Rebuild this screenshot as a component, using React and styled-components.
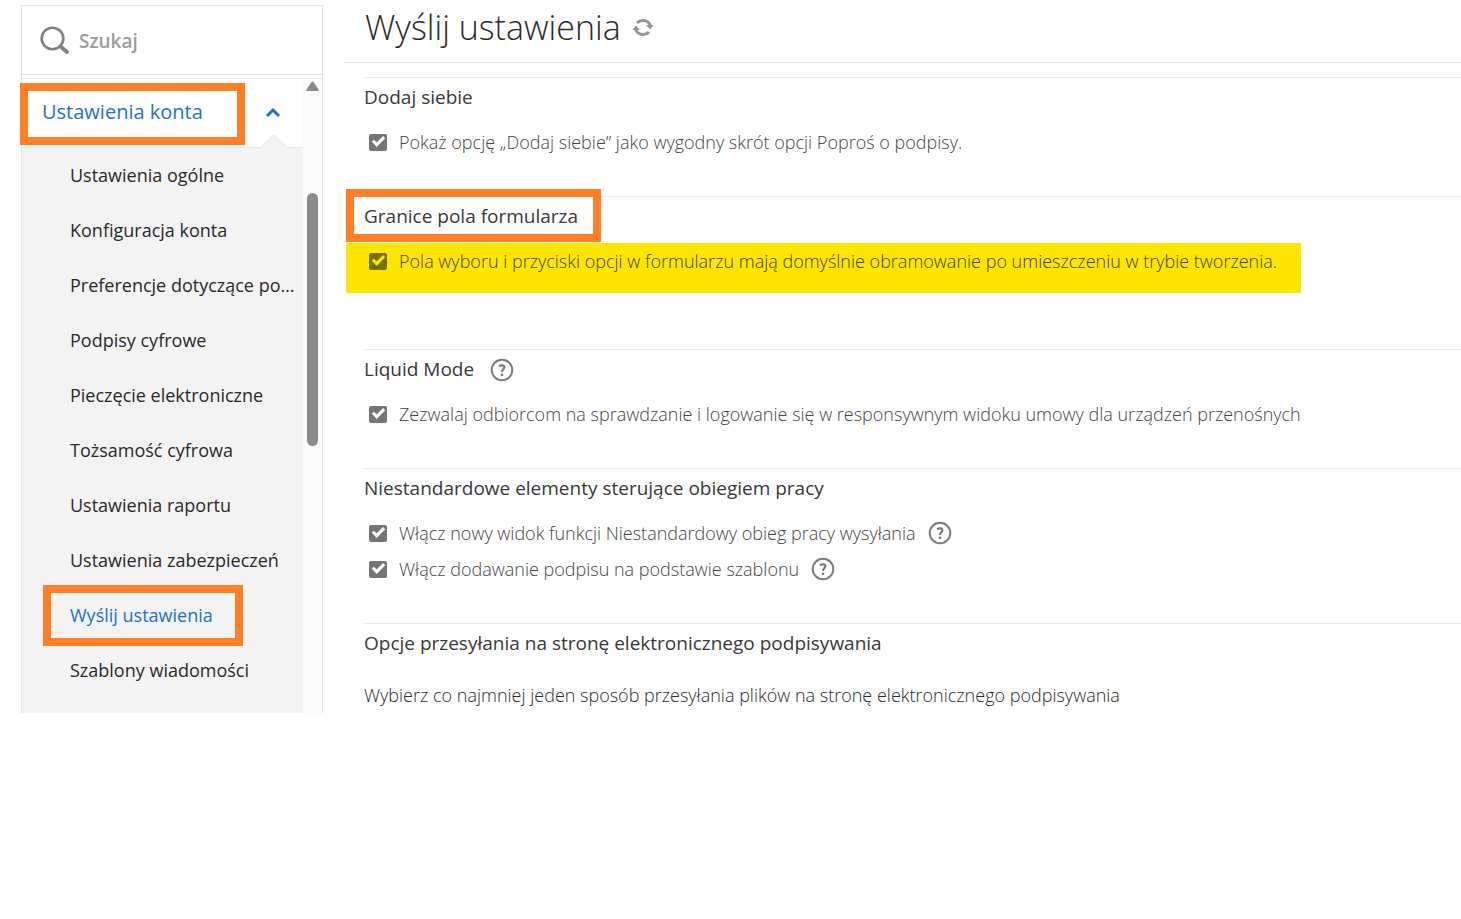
import React from 'react';
import styled, { createGlobalStyle, css } from 'styled-components';

const GlobalStyle = createGlobalStyle`
  *, *::before, *::after { box-sizing: border-box; }
  body {
    margin: 0;
    background: #fff;
    color: #4b4b4b;
    font-family: "Open Sans", "Noto Sans", sans-serif;
    font-size: 18px;
    line-height: 24px;
  }
  h1, h2, p, ul { margin: 0; padding: 0; }
  button, input { font: inherit; }
`;

const callout = css`
  position: relative;
  &::after {
    content: '';
    position: absolute;
    inset: ${p => p.$callout};
    border: 8px solid #ff7f27;
    pointer-events: none;
  }
`;

const Page = styled.div`
  display: grid;
  grid-template-columns: 302px minmax(0, 1fr);
  column-gap: 21px;
  padding-left: 21px;
`;

const Sidebar = styled.aside`
  margin-top: 5px;
  border: 1px solid #e4e4e4;
  border-bottom: 0;
  align-self: start;
`;

const Search = styled.label`
  display: flex;
  align-items: center;
  gap: 9px;
  height: 69px;
  padding: 2px 18px 0;
  border-bottom: 1px solid #e4e4e4;
`;

const SearchInput = styled.input`
  flex: 1;
  min-width: 0;
  border: 0;
  outline: 0;
  padding: 0;
  background: transparent;
  font-size: 19px;
  font-weight: 600;
  &::placeholder { color: #9b9b9b; opacity: 1; }
`;

const MenuArea = styled.div`
  display: flex;
  margin-top: 3px;
  border-top: 1px solid #eee;
`;

const Menu = styled.nav`
  flex: 1;
  min-width: 0;
`;

const GroupButton = styled.button`
  display: flex;
  align-items: center;
  justify-content: space-between;
  position: relative;
  width: 100%;
  height: 69px;
  padding: 0 22px 2px 20px;
  border: 0;
  border-bottom: 1px solid #e6e6e6;
  background: #fff;
  color: #2272c8;
  font-size: 20px;
  text-align: left;
`;

const GroupName = styled.span`
  ${p => p.$callout && callout}
`;

const Notch = styled.svg`
  position: absolute;
  right: 15px;
  bottom: -1px;
`;

const Items = styled.ul`
  list-style: none;
  padding-bottom: 15px;
  background: #f3f3f3;
`;

const Item = styled.li`
  display: flex;
  align-items: center;
  height: 55px;
  padding: 0 0 2px 48px;
  white-space: nowrap;
`;

const ItemLink = styled.a`
  color: ${p => (p.$active ? '#2272c8' : '#2a2a2a')};
  text-decoration: none;
  ${p => p.$callout && callout}
`;

const ScrollTrack = styled.div`
  width: 19px;
  padding-top: 2px;
  background: #fbfbfb;
  display: flex;
  flex-direction: column;
  align-items: center;
  gap: 102px;
`;

const ScrollThumb = styled.div`
  width: 11px;
  height: 253px;
  border-radius: 6px;
  background: #8b8b8b;
`;

const Main = styled.main`
  min-width: 0;
`;

const TitleBar = styled.header`
  display: flex;
  align-items: center;
  gap: 11px;
  height: 63px;
  padding: 0 0 8px 21px;
  margin-bottom: 14px;
  border-bottom: 1px solid #e4e4e4;
`;

const Title = styled.h1`
  color: #2a2a2a;
  font-size: 34px;
  font-weight: 300;
  line-height: 48px;
`;

const IconButton = styled.button`
  display: flex;
  padding: 0;
  border: 0;
  background: none;
`;

const Section = styled.section`
  margin-left: 20px;
  padding-bottom: 36px;
  border-top: 1px solid #eaeaea;
`;

const SectionHead = styled.div`
  display: flex;
  align-items: center;
  gap: 16px;
  height: 40px;
  margin-bottom: 6px;
`;

const Heading = styled.h2`
  padding-bottom: 2px;
  color: #383838;
  font-size: 19px;
  font-weight: 500;
  ${p => p.$callout && callout}
`;

const Option = styled.div`
  display: flex;
  align-items: center;
  gap: 12px;
  height: 36px;
  padding-left: 5px;
  white-space: nowrap;
  ${p => p.$highlighted && css`
    width: fit-content;
    height: 50px;
    margin: 0 0 20px -18px;
    padding: 0 24px 14px 23px;
    background: #ffe600;
  `}
`;

const Checkbox = styled.input.attrs({ type: 'checkbox' })`
  appearance: none;
  display: flex;
  justify-content: center;
  width: 18px;
  height: 17px;
  margin: 0;
  border-radius: 2px;
  background: ${p => (p.$highlighted ? '#757000' : '#757575')};
  &:checked::before {
    content: '';
    width: 7px;
    height: 12px;
    border: solid ${p => (p.$highlighted ? '#ffe600' : '#fff')};
    border-width: 0 3px 3px 0;
    transform: rotate(45deg);
  }
`;

const OptionLabel = styled.label`
  color: ${p => (p.$highlighted ? '#463f00' : '#444')};
  font-weight: 300;
`;

const Note = styled.p`
  color: #2a2a2a;
  font-weight: 300;
  line-height: 50px;
`;

const SearchIcon = () => (
  <svg width="30" height="30" viewBox="0 0 30 30" fill="none" stroke="#808080" aria-hidden="true">
    <circle cx="12.500" cy="12.500" r="10.800" strokeWidth="2.600" />
    <path d="M20.500 20.500 27 26" strokeWidth="4" strokeLinecap="round" />
  </svg>
);

const RefreshIcon = () => (
  <svg width="22" height="22" viewBox="0 0 22 22" fill="none" aria-hidden="true">
    <path d="M5 7A8 8 0 0 1 18.300 9.500M17 16A8 8 0 0 1 3.700 13.500" stroke="#959595" strokeWidth="3" />
    <path d="M14 9H21.500L18.300 13.500ZM.5 14H8L3.700 9.500Z" fill="#959595" />
  </svg>
);

const HelpIcon = () => (
  <svg width="24" height="24" viewBox="0 0 24 24" fill="none" stroke="#7c7c7c" aria-hidden="true">
    <circle cx="12" cy="12" r="10.300" strokeWidth="2" />
    <path d="M9.200 8.400C10.500 7 14.300 6.800 14.300 9.300C14.300 11.300 12 11.500 12 14" strokeWidth="2.200" />
    <circle cx="12" cy="16.800" r="1.400" fill="#7c7c7c" stroke="none" />
  </svg>
);

const Help = () => (
  <IconButton type="button" aria-label="Pomoc"><HelpIcon /></IconButton>
);

const menuItems = [
  'Ustawienia ogólne',
  'Konfiguracja konta',
  'Preferencje dotyczące po…',
  'Podpisy cyfrowe',
  'Pieczęcie elektroniczne',
  'Tożsamość cyfrowa',
  'Ustawienia raportu',
  'Ustawienia zabezpieczeń',
  'Wyślij ustawienia',
  'Szablony wiadomości',
];

const sections = [
  {
    title: 'Dodaj siebie',
    options: [{ id: 'add-me', text: 'Pokaż opcję „Dodaj siebie” jako wygodny skrót opcji Poproś o podpisy.' }],
  },
  {
    title: 'Granice pola formularza',
    callout: '-15px -23px -12px -18px',
    options: [{
      id: 'borders',
      highlighted: true,
      text: 'Pola wyboru i przyciski opcji w formularzu mają domyślnie obramowanie po umieszczeniu w trybie tworzenia.',
    }],
  },
  {
    title: 'Liquid Mode',
    help: true,
    options: [{ id: 'liquid', text: 'Zezwalaj odbiorcom na sprawdzanie i logowanie się w responsywnym widoku umowy dla urządzeń przenośnych' }],
  },
  {
    title: 'Niestandardowe elementy sterujące obiegiem pracy',
    options: [
      { id: 'workflow', help: true, text: 'Włącz nowy widok funkcji Niestandardowy obieg pracy wysyłania' },
      { id: 'template', help: true, text: 'Włącz dodawanie podpisu na podstawie szablonu' },
    ],
  },
  {
    title: 'Opcje przesyłania na stronę elektronicznego podpisywania',
    note: 'Wybierz co najmniej jeden sposób przesyłania plików na stronę elektronicznego podpisywania',
    options: [],
  },
];

export default function App() {
  return (
    <>
      <GlobalStyle />
      <Page>
        <Sidebar>
          <Search>
            <SearchIcon />
            <SearchInput type="text" placeholder="Szukaj" aria-label="Szukaj" />
          </Search>
          <MenuArea>
            <Menu>
              <GroupButton type="button" aria-expanded="true">
                <GroupName $callout="-17px -42px -21px -22px">Ustawienia konta</GroupName>
                <svg width="16" height="12" viewBox="0 0 16 12" fill="none" aria-hidden="true">
                  <path d="M2 10 8 4 14 10" stroke="#2272c8" strokeWidth="3" />
                </svg>
                <Notch width="28" height="14" viewBox="0 0 28 14" aria-hidden="true">
                  <path d="M0 14 14 1 28 14Z" fill="#f3f3f3" />
                  <path d="M1 13 14 1 27 13" fill="none" stroke="#e6e6e6" />
                </Notch>
              </GroupButton>
              <Items>
                {menuItems.map(name => {
                  const active = name === 'Wyślij ustawienia';
                  return (
                    <Item key={name}>
                      <ItemLink
                        href="#"
                        $active={active}
                        $callout={active ? '-18px -30px -19px -27px' : undefined}
                      >
                        {name}
                      </ItemLink>
                    </Item>
                  );
                })}
              </Items>
            </Menu>
            <ScrollTrack>
              <svg width="13" height="10" viewBox="0 0 13 10" aria-hidden="true">
                <path d="M5.500 1Q6.500 0 7.500 1L12.500 8.500Q13 10 12 10H1Q0 10 .5 8.500Z" fill="#8b8b8b" />
              </svg>
              <ScrollThumb />
            </ScrollTrack>
          </MenuArea>
        </Sidebar>
        <Main>
          <TitleBar>
            <Title>Wyślij ustawienia</Title>
            <IconButton type="button" aria-label="Odśwież"><RefreshIcon /></IconButton>
          </TitleBar>
          {sections.map(section => (
            <Section key={section.title}>
              <SectionHead>
                <Heading $callout={section.callout}>{section.title}</Heading>
                {section.help && <Help />}
              </SectionHead>
              {section.options.map(option => (
                <Option key={option.id} $highlighted={option.highlighted}>
                  <Checkbox id={option.id} defaultChecked $highlighted={option.highlighted} />
                  <OptionLabel htmlFor={option.id} $highlighted={option.highlighted}>{option.text}</OptionLabel>
                  {option.help && <Help />}
                </Option>
              ))}
              {section.note && <Note>{section.note}</Note>}
            </Section>
          ))}
        </Main>
      </Page>
    </>
  );
}
